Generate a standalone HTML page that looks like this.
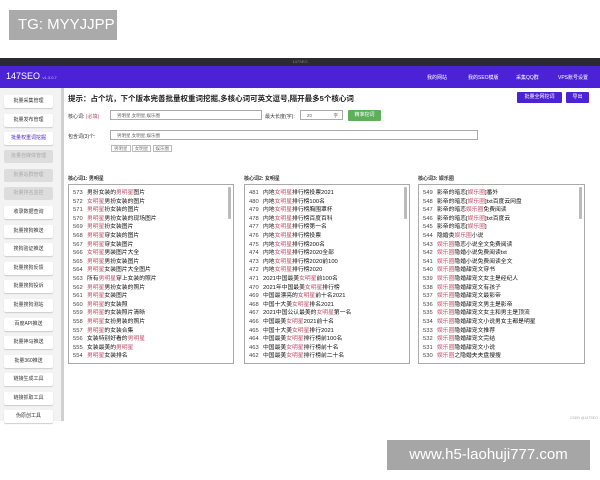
<!DOCTYPE html>
<html><head><meta charset="utf-8"><style>
*{margin:0;padding:0;box-sizing:border-box}
body{width:600px;height:480px;background:#fff;font-family:"Liberation Sans","Noto Sans CJK SC",sans-serif;position:relative;overflow:hidden}
.abs{position:absolute}
.tg{left:9px;top:10px;width:108px;height:30px;background:#aaa;color:#fff;font-size:15px;line-height:30px;padding-left:9px}
.wm{left:387px;top:440px;width:203px;height:30px;background:#a6a6a6;color:#fff;font-size:15px;line-height:30px;text-align:center}
.tb{left:0;top:58px;width:600px;height:8px;background:#2b2a30;color:#888;font-size:4px;line-height:8px;text-align:center}
.nav{left:0;top:66px;width:600px;height:22px;background:#4b22d6;color:#fff}
.nav .logo{position:absolute;left:6px;top:5px;font-size:9px}
.nav .logo small{font-size:4px;color:#cbbcf5}
.nav span.m{position:absolute;top:8px;font-size:5px}
.side{left:0;top:88px;width:61px;height:333px;background:#f3f3f3}
.sb{left:61px;top:88px;width:3px;height:333px;background:#d0d0d0}
.btn{position:absolute;left:4px;width:49px;height:13px;background:#fff;border-radius:2px;box-shadow:0 1px 1px #ccc;font-size:5px;line-height:13px;text-align:center;color:#333}
.btn.dis{background:#ddd;color:#aaa;box-shadow:none}
.btn.act{color:#4b22d6}
.main{left:64px;top:88px;width:536px;height:333px;background:#fff}
.t{font-size:5px;color:#333}
.inp{position:absolute;border:1px solid #aaa;background:#fff;font-size:4.5px;color:#666;line-height:9px;padding-left:6px;height:10px}
.box{position:absolute;top:184px;height:180px;border:1px solid #aaa;background:#fff}
.box .sc{position:absolute;right:2px;top:2px;width:3px;height:32px;background:#bbb;border-radius:1px}
.row{position:absolute;left:4px;font-size:5.8px;color:#111;white-space:nowrap;line-height:7px}
.row b{font-weight:normal;color:#444;display:inline-block;width:14px}
.row i{font-style:normal;color:#c0506a}
</style></head><body>
<div class="abs tg">TG: MYYJJPP</div>
<div class="abs tb">147SEO</div>
<div class="abs nav"><div class="logo">147SEO <small>v1.3.0.7</small></div>
<span class="m" style="left:427px">我的网站</span><span class="m" style="left:468px">我的SEO模版</span><span class="m" style="left:516px">采集QQ群</span><span class="m" style="left:558px">VPS账号设置</span></div>
<div class="abs side">
<div class="btn" style="top:7px">批量采集管理</div>
<div class="btn" style="top:26px">批量发布管理</div>
<div class="btn act" style="top:44px">批量权重词挖掘</div>
<div class="btn dis" style="top:62px">批量自媒体管理</div>
<div class="btn dis" style="top:81px">批量站群管理</div>
<div class="btn dis" style="top:99px">批量排名监控</div>
<div class="btn" style="top:118px">收录数据查询</div>
<div class="btn" style="top:137px">批量搜狗推送</div>
<div class="btn" style="top:155px">搜狗验证推送</div>
<div class="btn" style="top:174px">批量搜狗反馈</div>
<div class="btn" style="top:192px">批量搜狗投诉</div>
<div class="btn" style="top:211px">批量搜狗测站</div>
<div class="btn" style="top:230px">百度API推送</div>
<div class="btn" style="top:248px">批量神马推送</div>
<div class="btn" style="top:267px">批量360推送</div>
<div class="btn" style="top:285px">链接生成工具</div>
<div class="btn" style="top:304px">链接抓取工具</div>
<div class="btn" style="top:322px">伪原创工具</div>
</div>
<div class="abs sb"></div>
<div class="abs main"></div>
<div class="abs" style="left:68px;top:93px;font-size:7.5px;font-weight:bold;color:#222">提示：占个坑，下个版本完善批量权重词挖掘,多核心词可英文逗号,隔开最多5个核心词</div>
<div class="abs" style="left:517px;top:92px;width:45px;height:11px;background:#4b22d6;color:#fff;font-size:5px;line-height:11px;text-align:center;border-radius:1px">批量全网挖词</div>
<div class="abs" style="left:566px;top:92px;width:23px;height:11px;background:#4b22d6;color:#fff;font-size:5px;line-height:11px;text-align:center;border-radius:1px">导出</div>
<div class="abs t" style="left:68px;top:113px">核心词: <span style="color:#c0506a">(必填)</span></div>
<div class="inp" style="left:110px;top:110px;width:152px">男明星,女明星,娱乐圈</div>
<div class="abs t" style="left:265px;top:113px">最大长度(字):</div>
<div class="inp" style="left:300px;top:110px;width:43px">20<span style="position:absolute;right:4px">字</span></div>
<div class="abs" style="left:348px;top:110px;width:33px;height:11px;background:#5fae5a;color:#fff;font-size:5px;line-height:11px;text-align:center;border-radius:1px">精准挖词</div>
<div class="abs t" style="left:68px;top:133px">包含词(3)个:</div>
<div class="inp" style="left:110px;top:130px;width:368px">男明星,女明星,娱乐圈</div>
<div class="abs" style="left:111px;top:146px;font-size:4.5px;color:#777"><span style="border:1px solid #bbb;padding:0 2px">男明星</span> <span style="border:1px solid #bbb;padding:0 2px">女明星</span> <span style="border:1px solid #bbb;padding:0 2px">娱乐圈</span></div>
<div class="abs t" style="left:68px;top:175px;font-weight:bold">核心词1: 男明星</div>
<div class="abs t" style="left:244px;top:175px;font-weight:bold">核心词2: 女明星</div>
<div class="abs t" style="left:418px;top:175px;font-weight:bold">核心词3: 娱乐圈</div>
<div class="box" style="left:68px;width:166px"><div class="sc"></div>
<div class="row" style="top:5px"><b>573</b>男扮女装的<i>男明星</i>图片</div>
<div class="row" style="top:13.6px"><b>572</b><i>女明星</i>男扮女装的图片</div>
<div class="row" style="top:22.2px"><b>571</b><i>男明星</i>扮女装的图片</div>
<div class="row" style="top:30.8px"><b>570</b><i>男明星</i>男扮女装的现场图片</div>
<div class="row" style="top:39.4px"><b>569</b><i>男明星</i>扮女装图片</div>
<div class="row" style="top:48px"><b>568</b><i>男明星</i>穿女装的图片</div>
<div class="row" style="top:56.6px"><b>567</b><i>男明星</i>穿女装图片</div>
<div class="row" style="top:65.2px"><b>566</b><i>女明星</i>男装图片大全</div>
<div class="row" style="top:73.8px"><b>565</b><i>男明星</i>男扮女装图片</div>
<div class="row" style="top:82.4px"><b>564</b><i>男明星</i>女装图片大全图片</div>
<div class="row" style="top:91px"><b>563</b>所有<i>男明星</i>穿上女装的照片</div>
<div class="row" style="top:99.6px"><b>562</b><i>男明星</i>男扮女装的照片</div>
<div class="row" style="top:108.2px"><b>561</b><i>男明星</i>女装图片</div>
<div class="row" style="top:116.8px"><b>560</b><i>男明星</i>的女装照</div>
<div class="row" style="top:125.4px"><b>559</b><i>男明星</i>的女装照片清晰</div>
<div class="row" style="top:134px"><b>558</b><i>男明星</i>女扮男装的照片</div>
<div class="row" style="top:142.6px"><b>557</b><i>男明星</i>的女装合集</div>
<div class="row" style="top:151.2px"><b>556</b>女装特别好看的<i>男明星</i></div>
<div class="row" style="top:159.8px"><b>555</b>女装最美的<i>男明星</i></div>
<div class="row" style="top:168.4px"><b>554</b><i>男明星</i>女装排名</div>
</div>
<div class="box" style="left:244px;width:166px"><div class="sc"></div>
<div class="row" style="top:5px"><b>481</b>内地<i>女明星</i>排行榜投票2021</div>
<div class="row" style="top:13.6px"><b>480</b>内地<i>女明星</i>排行榜100名</div>
<div class="row" style="top:22.2px"><b>479</b>内地<i>女明星</i>排行榜胸围罩杯</div>
<div class="row" style="top:30.8px"><b>478</b>内地<i>女明星</i>排行榜百度百科</div>
<div class="row" style="top:39.4px"><b>477</b>内地<i>女明星</i>排行榜第一名</div>
<div class="row" style="top:48px"><b>476</b>内地<i>女明星</i>排行榜投票</div>
<div class="row" style="top:56.6px"><b>475</b>内地<i>女明星</i>排行榜200名</div>
<div class="row" style="top:65.2px"><b>474</b>内地<i>女明星</i>排行榜2020全部</div>
<div class="row" style="top:73.8px"><b>473</b>内地<i>女明星</i>排行榜2020前100</div>
<div class="row" style="top:82.4px"><b>472</b>内地<i>女明星</i>排行榜2020</div>
<div class="row" style="top:91px"><b>471</b>2021中国最美<i>女明星</i>前100名</div>
<div class="row" style="top:99.6px"><b>470</b>2021年中国最美<i>女明星</i>排行榜</div>
<div class="row" style="top:108.2px"><b>469</b>中国最漂亮的<i>女明星</i>前十名2021</div>
<div class="row" style="top:116.8px"><b>468</b>中国十大美<i>女明星</i>排名2021</div>
<div class="row" style="top:125.4px"><b>467</b>2021中国公认最美的<i>女明星</i>第一名</div>
<div class="row" style="top:134px"><b>466</b>中国最美<i>女明星</i>2021前十名</div>
<div class="row" style="top:142.6px"><b>465</b>中国十大美<i>女明星</i>排行2021</div>
<div class="row" style="top:151.2px"><b>464</b>中国最美<i>女明星</i>排行榜前100名</div>
<div class="row" style="top:159.8px"><b>463</b>中国最美<i>女明星</i>排行榜前十名</div>
<div class="row" style="top:168.4px"><b>462</b>中国最美<i>女明星</i>排行榜前二十名</div>
</div>
<div class="box" style="left:418px;width:167px"><div class="sc"></div>
<div class="row" style="top:5px"><b>549</b>影帝的暗恋[<i>娱乐圈</i>]番外</div>
<div class="row" style="top:13.6px"><b>548</b>影帝的暗恋[<i>娱乐圈</i>]txt百度云网盘</div>
<div class="row" style="top:22.2px"><b>547</b>影帝的暗恋<i>娱乐圈</i>免费阅读</div>
<div class="row" style="top:30.8px"><b>546</b>影帝的暗恋[<i>娱乐圈</i>]txt百度云</div>
<div class="row" style="top:39.4px"><b>545</b>影帝的暗恋[<i>娱乐圈</i>]</div>
<div class="row" style="top:48px"><b>544</b>隐婚类<i>娱乐圈</i>小说</div>
<div class="row" style="top:56.6px"><b>543</b><i>娱乐圈</i>隐恋小说全文免费阅读</div>
<div class="row" style="top:65.2px"><b>542</b><i>娱乐圈</i>隐婚小说免费阅读txt</div>
<div class="row" style="top:73.8px"><b>541</b><i>娱乐圈</i>隐婚小说免费阅读全文</div>
<div class="row" style="top:82.4px"><b>540</b><i>娱乐圈</i>隐婚甜宠文穿书</div>
<div class="row" style="top:91px"><b>539</b><i>娱乐圈</i>隐婚甜宠文女主是经纪人</div>
<div class="row" style="top:99.6px"><b>538</b><i>娱乐圈</i>隐婚甜宠文有孩子</div>
<div class="row" style="top:108.2px"><b>537</b><i>娱乐圈</i>隐婚甜宠文最影帝</div>
<div class="row" style="top:116.8px"><b>536</b><i>娱乐圈</i>隐婚甜宠文男主是影帝</div>
<div class="row" style="top:125.4px"><b>535</b><i>娱乐圈</i>隐婚甜宠文女主和男主是顶流</div>
<div class="row" style="top:134px"><b>534</b><i>娱乐圈</i>隐婚甜宠文小说男女主都是明星</div>
<div class="row" style="top:142.6px"><b>533</b><i>娱乐圈</i>隐婚甜宠文推荐</div>
<div class="row" style="top:151.2px"><b>532</b><i>娱乐圈</i>隐婚甜宠文完结</div>
<div class="row" style="top:159.8px"><b>531</b><i>娱乐圈</i>隐婚甜宠文小说</div>
<div class="row" style="top:168.4px"><b>530</b><i>娱乐圈</i>之隐婚夫夫盘搜搜</div>
</div>
<div class="abs" style="left:570px;top:416px;font-size:3.5px;color:#aaa">CSDN @147SEO</div>
<div class="abs wm">www.h5-laohuji777.com</div>
</body></html>
